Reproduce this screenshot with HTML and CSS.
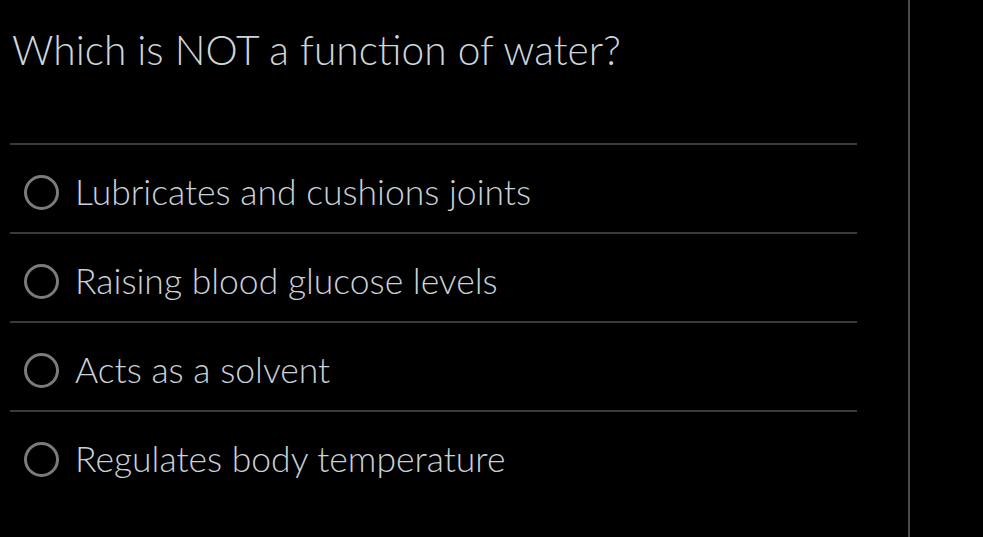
FILE: index.html
```html
<!DOCTYPE html>
<html lang="en">
<head>
<meta charset="utf-8">
<title>Quiz</title>
<link rel="stylesheet" href="styles.css">
</head>
<body>
<div class="layout">
  <main class="quiz">
    <h1 class="question">Which is NOT a function of water?</h1>
    <ul class="options">
      <li class="option"><span class="radio"></span><span class="label">Lubricates and cushions joints</span></li>
      <li class="option"><span class="radio"></span><span class="label">Raising blood glucose levels</span></li>
      <li class="option"><span class="radio"></span><span class="label">Acts as a solvent</span></li>
      <li class="option"><span class="radio"></span><span class="label">Regulates body temperature</span></li>
    </ul>
  </main>
  <aside class="side"></aside>
</div>
</body>
</html>
```
FILE: styles.css
```css
html, body {
  margin: 0;
  padding: 0;
  background: #000;
  height: 100%;
}

body {
  font-family: Lato, "Open Sans", sans-serif;
  font-weight: 300;
  color: #c9d1d9;
}

.layout {
  display: flex;
  height: 537px;
  overflow: hidden;
}

.quiz {
  width: 847px;
  padding-left: 10px;
  flex: none;
}

.question {
  margin: 0;
  padding: 26px 0 0 2px;
  font-size: 40.7px;
  font-weight: 300;
  line-height: 48px;
  color: #cdd5dc;
}

.options {
  list-style: none;
  margin: 69px 0 0;
  padding: 0;
}

.option {
  display: flex;
  align-items: center;
  gap: 16px;
  height: 87px;
  border-top: 2px solid #3a3a3a;
}

.radio {
  width: 29px;
  height: 29px;
  border: 3px solid #7b7b7c;
  border-radius: 50%;
  margin-left: 14px;
  margin-top: 8px;
  flex: none;
}

.label {
  font-size: 35.5px;
  line-height: 40px;
  margin-top: 6px;
}

.side {
  margin-left: 51px;
  width: 2px;
  background: #4c4c4c;
  flex: none;
}
```
